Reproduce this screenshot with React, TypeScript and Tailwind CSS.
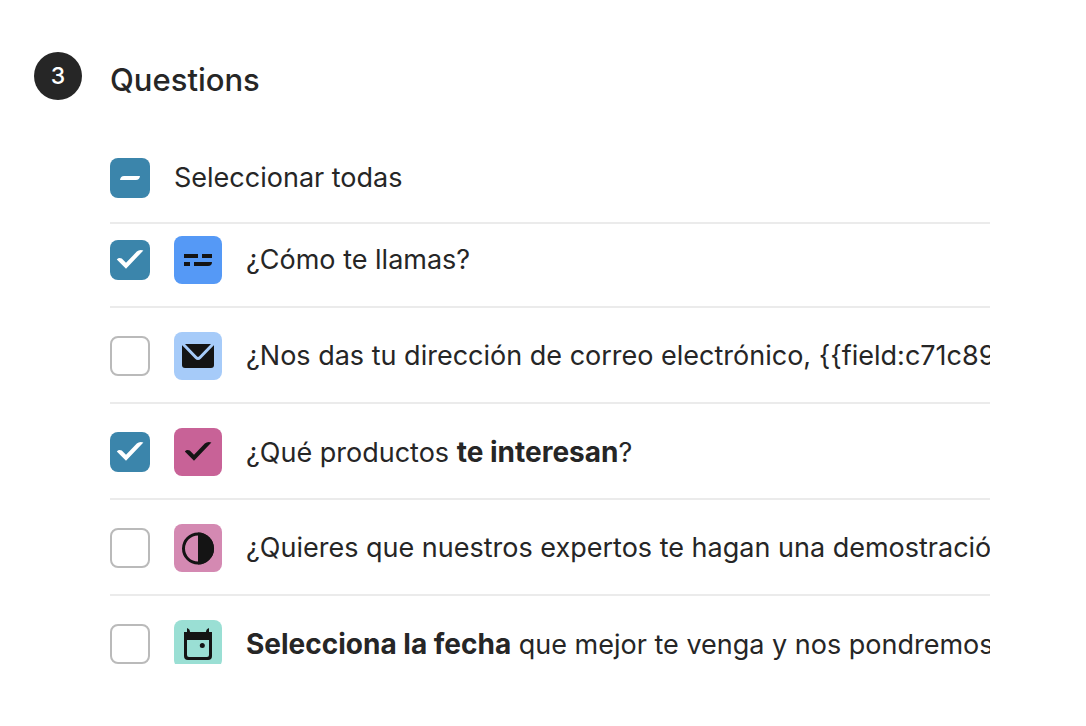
import React, { useState } from "react";

type Question = {
  id: number;
  label: React.ReactNode;
  color: string;
  icon: React.ReactNode;
};

const CHECK_PATH =
  "M6.8 19.4 Q9 17.2 11.8 18.6 L16 22.8 L26.8 11.6 Q29.4 9 33.4 10.4 L16 28.8 Z";

const questions: Question[] = [
  {
    id: 1,
    label: "¿Cómo te llamas?",
    color: "bg-[#5599f6]",
    icon: <path d="M10 18h14v4H10zM28 18h10v4H28zM10 26h6v4h-6zM20 26h18q0 4-4 4H20z" />,
  },
  {
    id: 2,
    label: "¿Nos das tu dirección de correo electrónico, {{field:c71c890d}}?",
    color: "bg-[#a6cbf9]",
    icon: (
      <>
        <path d="M8 12h32v21q0 3-3 3H11q-3 0-3-3z" />
        <path d="M8.5 11.5l13.5 14q2 2 4 0l13.5-14" fill="none" stroke="#a6cbf9" strokeWidth="3" />
      </>
    ),
  },
  {
    id: 3,
    label: (
      <>
        ¿Qué productos <b className="text-[28px] font-bold">te interesan</b>?
      </>
    ),
    color: "bg-[#c86297]",
    icon: <path d={CHECK_PATH} transform="translate(4 4)" />,
  },
  {
    id: 4,
    label: "¿Quieres que nuestros expertos te hagan una demostración?",
    color: "bg-[#d489b2]",
    icon: (
      <>
        <circle cx="24" cy="24.5" r="14.5" fill="none" stroke="#141414" strokeWidth="3" />
        <path d="M24 8.5a16 16 0 0 1 0 32z" />
      </>
    ),
  },
  {
    id: 5,
    label: (
      <>
        <b className="text-[28px] font-bold">Selecciona la fecha</b> que mejor te venga y nos pondremos en contacto
      </>
    ),
    color: "bg-[#9adfd4]",
    icon: (
      <>
        <path
          fillRule="evenodd"
          d="M10 12h28v24q0 4-4 4H14q-4 0-4-4zM13 20v15q0 2 2 2h18q2 0 2-2V20z"
        />
        <path d="M13 8q3 1 3 4h-3zM35 8q-3 1-3 4h3z" />
        <circle cx="28.3" cy="25.5" r="2.5" />
      </>
    ),
  },
];

type CheckboxProps = {
  id: string;
  checked: boolean;
  partial?: boolean;
  onChange: () => void;
};

const Checkbox: React.FC<CheckboxProps> = ({ id, checked, partial = false, onChange }) => (
  <span className="grid h-10 w-10 shrink-0">
    <input
      id={id}
      type="checkbox"
      checked={checked}
      ref={(el) => {
        if (el) el.indeterminate = partial;
      }}
      onChange={onChange}
      className={`col-start-1 row-start-1 h-10 w-10 cursor-pointer appearance-none rounded-lg ${
        checked || partial ? "bg-[#3b85ab]" : "border-2 border-[#bababa] bg-white"
      }`}
    />
    {(checked || partial) && (
      <svg viewBox="0 0 40 40" className="pointer-events-none col-start-1 row-start-1 h-10 w-10 fill-white">
        <path d={partial ? "M10 22q.5-4 4-4h16q-.5 4-4 4z" : CHECK_PATH} />
      </svg>
    )}
  </span>
);

const App: React.FC = () => {
  const [selected, setSelected] = useState<number[]>([1, 3]);
  const all = selected.length === questions.length;

  const toggle = (id: number) =>
    setSelected(selected.includes(id) ? selected.filter((s) => s !== id) : [...selected, id]);

  return (
    <section className="flex gap-7 bg-white pt-13 pr-24 pl-[34px] font-[Inter,sans-serif] text-[#262626]">
      <span className="flex h-12 w-12 shrink-0 items-center justify-center rounded-full bg-[#262626] text-[23px] font-medium text-white">
        3
      </span>
      <div className="min-w-0 flex-1">
        <h2 className="py-2 text-[31px] leading-10 font-medium">Questions</h2>

        {/* Select all */}
        <div className="mt-[50px] flex items-center gap-6 border-b-2 border-[#ebebeb] pb-6">
          <Checkbox
            id="all"
            checked={all}
            partial={selected.length > 0 && !all}
            onChange={() => setSelected(all ? [] : questions.map((q) => q.id))}
          />
          <label htmlFor="all" className="text-[27px] leading-10">
            Seleccionar todas
          </label>
        </div>

        {/* Question list */}
        <ul className="max-h-[440px] overflow-hidden">
          {questions.map((q) => (
            <li
              key={q.id}
              className="flex items-center gap-6 border-b-2 border-[#ebebeb] pt-6 pb-[22px] first:pt-3"
            >
              <Checkbox id={`q${q.id}`} checked={selected.includes(q.id)} onChange={() => toggle(q.id)} />
              <label htmlFor={`q${q.id}`} className="flex min-w-0 flex-1 items-center gap-6">
                <svg viewBox="0 0 48 48" className={`h-12 w-12 shrink-0 rounded-lg fill-[#141414] ${q.color}`}>
                  {q.icon}
                </svg>
                <span className="min-w-0 flex-1 overflow-hidden text-[27px] leading-10 whitespace-nowrap">
                  {q.label}
                </span>
              </label>
            </li>
          ))}
        </ul>
      </div>
    </section>
  );
};

export default App;
